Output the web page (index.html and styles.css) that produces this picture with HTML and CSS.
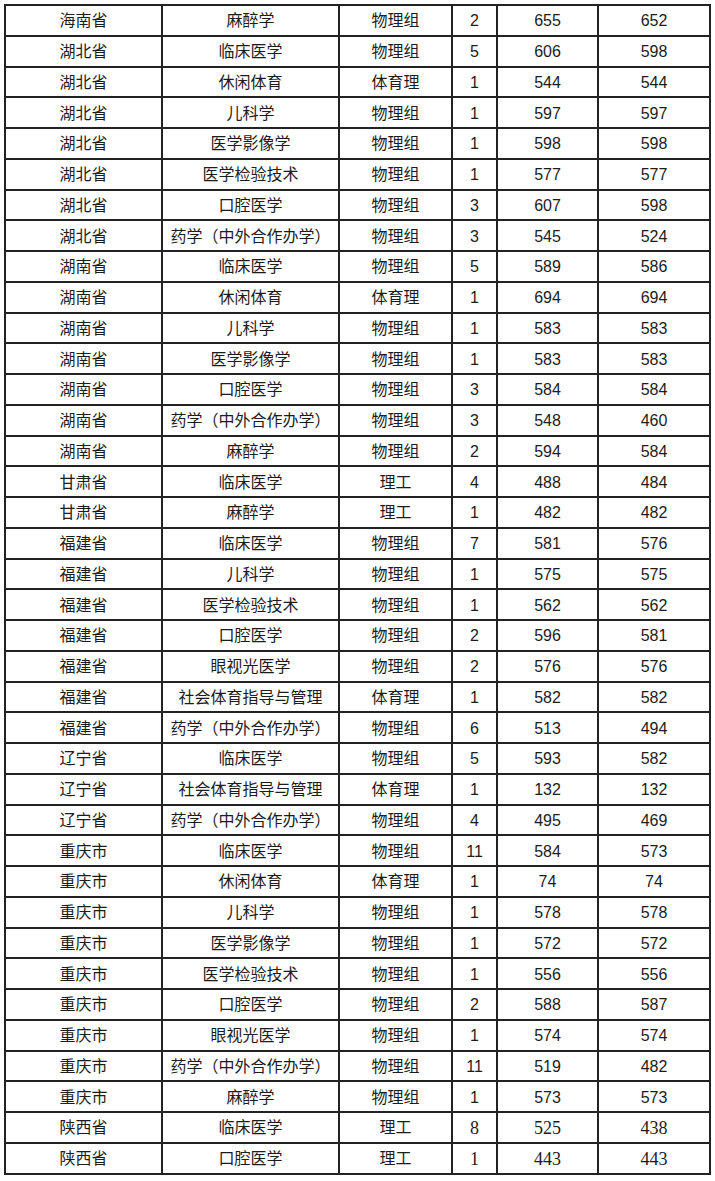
FILE: index.html
```html
<!DOCTYPE html>
<html lang="zh-CN">
<head>
<meta charset="utf-8">
<title>录取分数</title>
<link rel="stylesheet" href="styles.css">
</head>
<body>
<table class="score-table">
<colgroup>
<col class="c-prov"><col class="c-major"><col class="c-type"><col class="c-num"><col class="c-max"><col class="c-min">
</colgroup>
<tbody>
<tr><td>海南省</td><td>麻醉学</td><td>物理组</td><td>2</td><td>655</td><td>652</td></tr>
<tr><td>湖北省</td><td>临床医学</td><td>物理组</td><td>5</td><td>606</td><td>598</td></tr>
<tr><td>湖北省</td><td>休闲体育</td><td>体育理</td><td>1</td><td>544</td><td>544</td></tr>
<tr><td>湖北省</td><td>儿科学</td><td>物理组</td><td>1</td><td>597</td><td>597</td></tr>
<tr><td>湖北省</td><td>医学影像学</td><td>物理组</td><td>1</td><td>598</td><td>598</td></tr>
<tr><td>湖北省</td><td>医学检验技术</td><td>物理组</td><td>1</td><td>577</td><td>577</td></tr>
<tr><td>湖北省</td><td>口腔医学</td><td>物理组</td><td>3</td><td>607</td><td>598</td></tr>
<tr><td>湖北省</td><td>药学（中外合作办学）</td><td>物理组</td><td>3</td><td>545</td><td>524</td></tr>
<tr><td>湖南省</td><td>临床医学</td><td>物理组</td><td>5</td><td>589</td><td>586</td></tr>
<tr><td>湖南省</td><td>休闲体育</td><td>体育理</td><td>1</td><td>694</td><td>694</td></tr>
<tr><td>湖南省</td><td>儿科学</td><td>物理组</td><td>1</td><td>583</td><td>583</td></tr>
<tr><td>湖南省</td><td>医学影像学</td><td>物理组</td><td>1</td><td>583</td><td>583</td></tr>
<tr><td>湖南省</td><td>口腔医学</td><td>物理组</td><td>3</td><td>584</td><td>584</td></tr>
<tr><td>湖南省</td><td>药学（中外合作办学）</td><td>物理组</td><td>3</td><td>548</td><td>460</td></tr>
<tr><td>湖南省</td><td>麻醉学</td><td>物理组</td><td>2</td><td>594</td><td>584</td></tr>
<tr><td>甘肃省</td><td>临床医学</td><td>理工</td><td>4</td><td>488</td><td>484</td></tr>
<tr><td>甘肃省</td><td>麻醉学</td><td>理工</td><td>1</td><td>482</td><td>482</td></tr>
<tr><td>福建省</td><td>临床医学</td><td>物理组</td><td>7</td><td>581</td><td>576</td></tr>
<tr><td>福建省</td><td>儿科学</td><td>物理组</td><td>1</td><td>575</td><td>575</td></tr>
<tr><td>福建省</td><td>医学检验技术</td><td>物理组</td><td>1</td><td>562</td><td>562</td></tr>
<tr><td>福建省</td><td>口腔医学</td><td>物理组</td><td>2</td><td>596</td><td>581</td></tr>
<tr><td>福建省</td><td>眼视光医学</td><td>物理组</td><td>2</td><td>576</td><td>576</td></tr>
<tr><td>福建省</td><td>社会体育指导与管理</td><td>体育理</td><td>1</td><td>582</td><td>582</td></tr>
<tr><td>福建省</td><td>药学（中外合作办学）</td><td>物理组</td><td>6</td><td>513</td><td>494</td></tr>
<tr><td>辽宁省</td><td>临床医学</td><td>物理组</td><td>5</td><td>593</td><td>582</td></tr>
<tr><td>辽宁省</td><td>社会体育指导与管理</td><td>体育理</td><td>1</td><td>132</td><td>132</td></tr>
<tr><td>辽宁省</td><td>药学（中外合作办学）</td><td>物理组</td><td>4</td><td>495</td><td>469</td></tr>
<tr><td>重庆市</td><td>临床医学</td><td>物理组</td><td>11</td><td>584</td><td>573</td></tr>
<tr><td>重庆市</td><td>休闲体育</td><td>体育理</td><td>1</td><td>74</td><td>74</td></tr>
<tr><td>重庆市</td><td>儿科学</td><td>物理组</td><td>1</td><td>578</td><td>578</td></tr>
<tr><td>重庆市</td><td>医学影像学</td><td>物理组</td><td>1</td><td>572</td><td>572</td></tr>
<tr><td>重庆市</td><td>医学检验技术</td><td>物理组</td><td>1</td><td>556</td><td>556</td></tr>
<tr><td>重庆市</td><td>口腔医学</td><td>物理组</td><td>2</td><td>588</td><td>587</td></tr>
<tr><td>重庆市</td><td>眼视光医学</td><td>物理组</td><td>1</td><td>574</td><td>574</td></tr>
<tr><td>重庆市</td><td>药学（中外合作办学）</td><td>物理组</td><td>11</td><td>519</td><td>482</td></tr>
<tr><td>重庆市</td><td>麻醉学</td><td>物理组</td><td>1</td><td>573</td><td>573</td></tr>
<tr class="serif-nums"><td>陕西省</td><td>临床医学</td><td>理工</td><td>8</td><td>525</td><td>438</td></tr>
<tr class="serif-nums"><td>陕西省</td><td>口腔医学</td><td>理工</td><td>1</td><td>443</td><td>443</td></tr>
</tbody>
</table>
</body>
</html>
```

FILE: styles.css
```css
html, body {
  margin: 0;
  padding: 0;
  background: #fff;
}

body {
  padding: 4px 0 0 4px;
  font-family: "Liberation Sans", "Noto Sans CJK SC", sans-serif;
  font-size: 16px;
  color: #1c1c1c;
}

.score-table {
  border-collapse: collapse;
  table-layout: fixed;
  width: 705px;
}

.c-prov { width: 157px; }
.c-major { width: 177px; }
.c-type { width: 113px; }
.c-num { width: 45px; }
.c-max { width: 101px; }
.c-min { width: 112px; }

.score-table tr {
  height: 30.76px;
}

.score-table td {
  border: 2px solid #222;
  padding: 2px 0 0;
  text-align: center;
  vertical-align: middle;
  line-height: 18px;
  white-space: nowrap;
}

.serif-nums td {
  font-family: "Liberation Serif", "Noto Sans CJK SC", serif;
  font-size: 18px;
}

.serif-nums td:nth-child(-n+3) {
  font-family: "Liberation Sans", "Noto Sans CJK SC", sans-serif;
  font-size: 16px;
}
```
